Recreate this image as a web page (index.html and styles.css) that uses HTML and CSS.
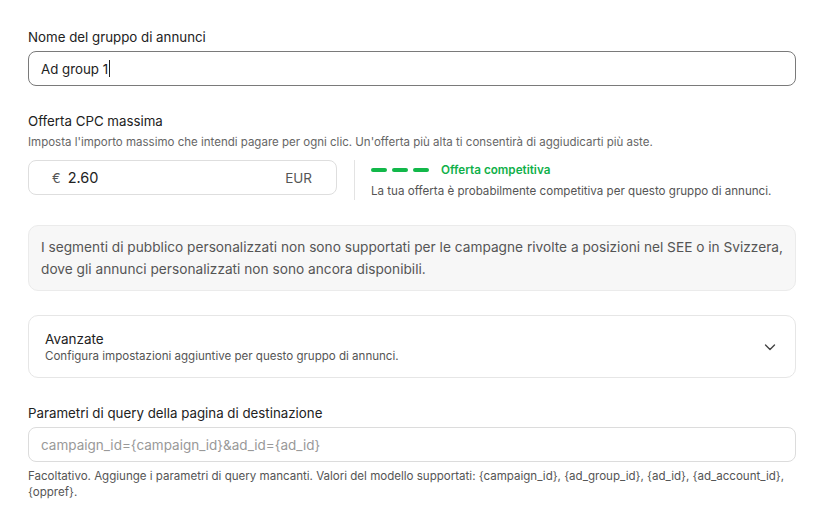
FILE: index.html
```html
<!DOCTYPE html>
<html lang="it">
<head>
<meta charset="utf-8">
<link rel="stylesheet" href="styles.css">
</head>
<body>
<main class="form">
  <section class="field first">
    <label class="label">Nome del gruppo di annunci</label>
    <div class="input strong"><span class="value">Ad group 1</span><span class="caret"></span></div>
  </section>

  <section class="field cpc">
    <label class="label">Offerta CPC massima</label>
    <p class="hint">Imposta l'importo massimo che intendi pagare per ogni clic. Un'offerta più alta ti consentirà di aggiudicarti più aste.</p>
    <div class="bid-row">
      <div class="input money">
        <span class="cur">€</span><span class="amount">2.60</span><span class="code">EUR</span>
      </div>
      <div class="status">
        <div class="status-head">
          <span class="dashes"><i></i><i></i><i></i></span>
          <span class="status-title">Offerta competitiva</span>
        </div>
        <p class="status-text">La tua offerta è probabilmente competitiva per questo gruppo di annunci.</p>
      </div>
    </div>
  </section>

  <div class="notice">I segmenti di pubblico personalizzati non sono supportati per le campagne rivolte a posizioni nel SEE o in Svizzera, dove gli annunci personalizzati non sono ancora disponibili.</div>

  <div class="advanced">
    <div class="adv-text">
      <div class="adv-title">Avanzate</div>
      <div class="adv-sub">Configura impostazioni aggiuntive per questo gruppo di annunci.</div>
    </div>
    <svg class="chev" width="14" height="14" viewBox="0 0 14 14"><path d="M2.5 5 L7 9.5 L11.5 5" fill="none" stroke="#444" stroke-width="1.4" stroke-linecap="round" stroke-linejoin="round"/></svg>
  </div>

  <section class="field query">
    <label class="label">Parametri di query della pagina di destinazione</label>
    <div class="input light"><span class="placeholder">campaign_id={campaign_id}&amp;ad_id={ad_id}</span></div>
    <p class="help">Facoltativo. Aggiunge i parametri di query mancanti. Valori del modello supportati: {campaign_id}, {ad_group_id}, {ad_id}, {ad_account_id}, {oppref}.</p>
  </section>
</main>
</body>
</html>
```

FILE: styles.css
```css
* { box-sizing: border-box; }
html, body { margin: 0; padding: 0; background: #fff; }
body {
  font-family: Inter, "Noto Sans", "Liberation Sans", sans-serif;
  color: #222;
}
.form {
  width: 768px;
  margin-left: 28px;
  padding-top: 28px;
  display: flex;
  flex-direction: column;
}
.field { display: flex; flex-direction: column; }
.label {
  font-size: 13.3px;
  line-height: 18px;
  color: #222;
  margin-bottom: 5px;
}
.input {
  height: 35px;
  border-radius: 8px;
  border: 1px solid #dcdcdc;
  display: flex;
  align-items: center;
  padding: 0 12px;
  font-size: 13.3px;
}
.input.strong { border-color: #7a7a7a; }
.value { color: #222; }
.caret { width: 1px; height: 17px; background: #222; margin-left: 1px; }
.cpc { margin-top: 26px; }
.hint {
  margin: -1px 0 10px;
  font-size: 11.5px;
  line-height: 16px;
  color: #666;
}
.bid-row { display: flex; align-items: flex-start; }
.input.money {
  width: 309px;
  padding: 0 24px 0 23px;
  border-color: #dedede;
  font-size: 14.5px;
}
.cur { color: #555; font-size: 13px; margin-right: 7px; }
.amount { color: #222; }
.code { margin-left: auto; color: #555; font-size: 13.5px; }
.status {
  margin-left: 17px;
  border-left: 1px solid #e3e3e3;
  padding-left: 16px;
  padding-top: 1px;
  height: 40px;
  display: flex;
  flex-direction: column;
}
.status-head { display: flex; align-items: center; height: 18px; }
.dashes { display: flex; gap: 5px; margin-right: 12px; }
.dashes i { display: block; width: 16px; height: 4px; border-radius: 2px; background: #12b84a; }
.status-title { font-size: 11.7px; font-weight: 600; color: #10b04a; }
.status-text { margin: 4px 0 0; font-size: 11.6px; line-height: 16px; color: #555; }
.notice {
  margin-top: 25px;
  background: #f7f7f7;
  border: 1px solid #ebebeb;
  border-radius: 10px;
  padding: 10px 12px 10px 12px;
  font-size: 13.7px;
  line-height: 22px;
  color: #555;
  height: 66px;
}
.advanced {
  margin-top: 24px;
  border: 1px solid #e6e6e6;
  border-radius: 10px;
  height: 63px;
  display: flex;
  align-items: center;
  padding: 0 18px 0 16px;
}
.adv-text { flex: 1; display: flex; flex-direction: column; }
.adv-title { font-size: 13.5px; line-height: 18px; color: #222; }
.adv-sub { font-size: 11.55px; line-height: 16px; color: #555; }
.chev { display: block; }
.query { margin-top: 26px; }
.input.light { border-color: #dcdcdc; }
.placeholder { color: #999; font-size: 13.5px; }
.help { margin: 6px 0 0; font-size: 11.55px; line-height: 16px; color: #555; }
```
